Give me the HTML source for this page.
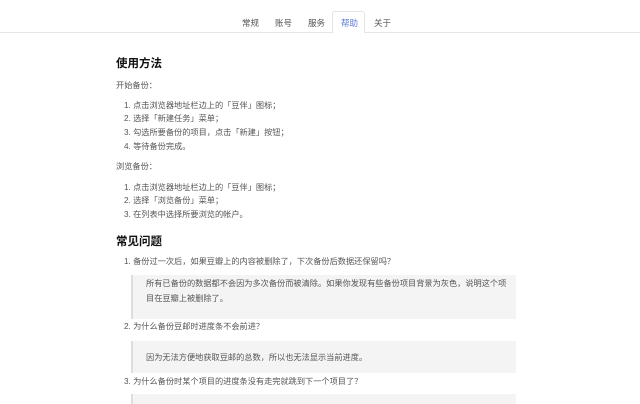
<!DOCTYPE html>
<html><head><meta charset="utf-8"><style>
*{margin:0;padding:0;box-sizing:border-box}
body{width:640px;height:400px;overflow:hidden;background:#fff;font-family:"Liberation Sans","Noto Sans CJK SC",sans-serif;color:#555;font-size:8.2px;position:relative}
.a{position:absolute;white-space:nowrap;line-height:12px}
.bar{position:absolute;left:0;top:32px;width:640px;height:1px;background:#e6e6e6}
.tab{position:absolute;top:17px;font-size:8.5px;color:#555}
.act{position:absolute;left:332px;top:11px;width:33px;height:22px;border:1px solid #e3e3e3;border-bottom:none;border-radius:3px 3px 0 0;background:#fff}
h2{position:absolute;font-size:11.5px;color:#111;font-weight:bold;white-space:nowrap}
.bq{position:absolute;left:131px;width:385px;background:#f4f4f4;border-left:2px solid #ddd}
</style></head><body>
<div class="bar"></div>
<div class="act"></div>
<span class="tab" style="left:242px">常规</span>
<span class="tab" style="left:275px">账号</span>
<span class="tab" style="left:308px">服务</span>
<span class="tab" style="left:341px;color:#5a7fd6">帮助</span>
<span class="tab" style="left:374px">关于</span>

<h2 style="left:116px;top:55px">使用方法</h2>
<div class="a" style="left:116px;top:80px">开始备份：</div>
<div class="a" style="left:124px;top:100px">1. 点击浏览器地址栏边上的「豆伴」图标；</div>
<div class="a" style="left:124px;top:113px">2. 选择「新建任务」菜单；</div>
<div class="a" style="left:124px;top:127px">3. 勾选所要备份的项目，点击「新建」按钮；</div>
<div class="a" style="left:124px;top:141px">4. 等待备份完成。</div>
<div class="a" style="left:116px;top:161px">浏览备份：</div>
<div class="a" style="left:124px;top:182px">1. 点击浏览器地址栏边上的「豆伴」图标；</div>
<div class="a" style="left:124px;top:195px">2. 选择「浏览备份」菜单；</div>
<div class="a" style="left:124px;top:209px">3. 在列表中选择所要浏览的帐户。</div>

<h2 style="left:116px;top:233px">常见问题</h2>
<div class="a" style="left:124px;top:256px">1. 备份过一次后，如果豆瓣上的内容被删除了，下次备份后数据还保留吗？</div>
<div class="bq" style="top:275px;height:44px"></div>
<div class="a" style="left:146px;top:278px">所有已备份的数据都不会因为多次备份而被清除。如果你发现有些备份项目背景为灰色，说明这个项</div>
<div class="a" style="left:146px;top:293px">目在豆瓣上被删除了。</div>
<div class="a" style="left:124px;top:321px">2. 为什么备份豆邮时进度条不会前进？</div>
<div class="bq" style="top:341px;height:32px"></div>
<div class="a" style="left:146px;top:352px">因为无法方便地获取豆邮的总数，所以也无法显示当前进度。</div>
<div class="a" style="left:124px;top:376px">3. 为什么备份时某个项目的进度条没有走完就跳到下一个项目了？</div>
<div class="bq" style="top:394px;height:10px"></div>
</body></html>
